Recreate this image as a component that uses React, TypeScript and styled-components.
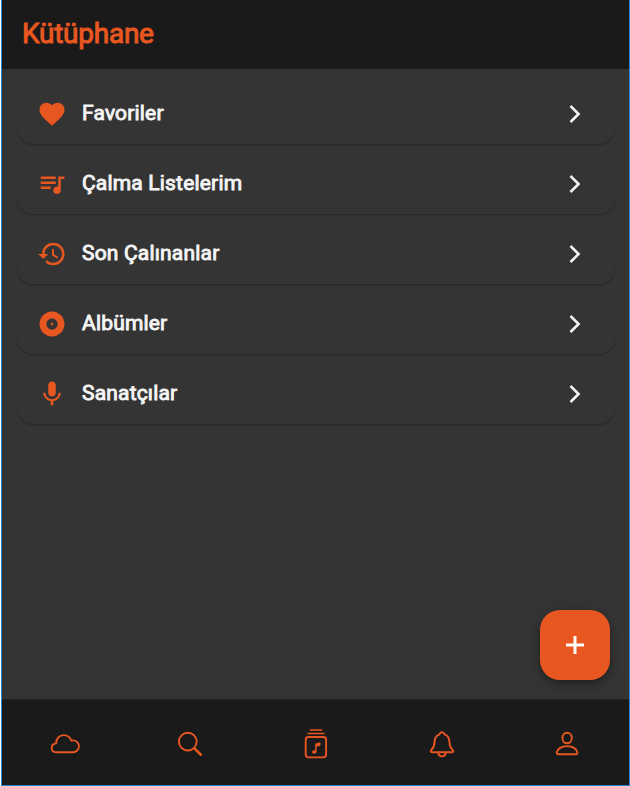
import React from "react";
import styled, { createGlobalStyle } from "styled-components";
import {
  MdAlbum,
  MdFavorite,
  MdHistory,
  MdMic,
  MdQueueMusic,
} from "react-icons/md";
import type { IconType } from "react-icons";

const accent = "#e95721";
const surface = "#343434";

const GlobalStyle = createGlobalStyle`
  *, *::before, *::after { box-sizing: border-box; }
  html, body { margin: 0; background: #fff; }
  body { font-family: Roboto, sans-serif; overflow: hidden; }
`;

const Screen = styled.div`
  height: 786px;
  margin-left: 1px;
  border: solid #2a84cc;
  border-width: 0 1px 1px;
  display: flex;
  flex-direction: column;
  background: ${surface};
`;

const Header = styled.header`
  height: 69px;
  flex: none;
  display: flex;
  align-items: center;
  padding: 0 20px 2px;
  background: #1a1a1a;
`;

const Title = styled.h1`
  margin: 0;
  color: ${accent};
  font-size: 28px;
  font-weight: 400;
  line-height: 33px;
  letter-spacing: -0.25px;
  -webkit-text-stroke: 1px ${accent};
`;

const Content = styled.main`
  position: relative;
  flex: 1;
  padding: 15px 14px 0 15px;
`;

const List = styled.ul`
  list-style: none;
  margin: 0;
  padding: 0;
  display: flex;
  flex-direction: column;
  gap: 10px;
`;

const Row = styled.li`
  height: 60px;
  display: flex;
  align-items: center;
  padding: 0 34px 0 20px;
  border-radius: 16px;
  background: ${surface};
  box-shadow: 0 1px 1.5px rgba(0, 0, 0, 0.25);
`;

const RowIcon = styled.span`
  display: flex;
  margin-right: 15px;
  color: ${accent};
`;

const Label = styled.span`
  flex: 1;
  color: #f5f5f5;
  font-size: 21px;
  line-height: 26px;
  letter-spacing: 0.18px;
  padding-bottom: 2px;
  -webkit-text-stroke: 0.9px #f5f5f5;
`;

const AddButton = styled.button`
  position: absolute;
  right: 19px;
  bottom: 19.5px;
  width: 70px;
  height: 70px;
  display: grid;
  place-items: center;
  padding: 0;
  border: 0;
  border-radius: 20px;
  background: ${accent};
  box-shadow: 0 3px 5px -1px rgba(0, 0, 0, 0.2), 0 6px 10px rgba(0, 0, 0, 0.14),
    0 1px 12px rgba(0, 0, 0, 0.12);
`;

const NavBar = styled.nav`
  height: 86px;
  flex: none;
  display: grid;
  grid-template-columns: repeat(5, 125.6px);
  background: #1a1a1a;
  border-top: 1px solid #242424;
`;

const NavItem = styled.a`
  display: grid;
  place-items: center;
  padding-top: 1px;
  color: ${accent};
`;

const Line = styled.svg`
  display: block;
  fill: none;
  stroke: currentColor;
  stroke-width: 1.9;
  stroke-linejoin: round;
  stroke-linecap: round;
`;

const Chevron = () => (
  <svg width="12" height="20" viewBox="0 0 12 20" fill="none" stroke="#f5f5f5" strokeWidth="2.5">
    <path d="M1.5 2 9.6 10 1.5 18" />
  </svg>
);

const Plus = () => (
  <svg width="20" height="20" viewBox="0 0 20 20" fill="none" stroke="#fff" strokeWidth="3">
    <path d="M10 1v18M1 10h18" />
  </svg>
);

const CloudIcon = () => (
  <Line width="32" height="32" viewBox="0 0 32 32">
    <path d="M7 25.200h17a5.900 5.900 0 0 0 0-11.800c-.8 0-1.200 0-1.700.2C21.200 10.500 18 8.100 14.600 8.100c-4.200 0-7.400 3.500-7.500 8.100C4.500 16.600 2.700 18.500 2.700 21c0 2.500 1.800 4.200 4.300 4.200z" />
  </Line>
);

const SearchIcon = () => (
  <Line width="32" height="32" viewBox="0 0 32 32">
    <circle cx="13.800" cy="14.600" r="8.900" />
    <path d="m20.400 21.400 6.500 6.300" strokeWidth="2.600" />
  </Line>
);

const MusicLibraryIcon = () => (
  <Line width="32" height="32" viewBox="0 0 32 32">
    <path d="M10.300 3.100h11.400M8 6.500h16" strokeWidth="1.500" />
    <rect x="5.700" y="10" width="20.400" height="20.400" rx="2.800" />
    <path d="M15.900 24.700V17.700l3.700-1.100v1.100" strokeWidth="1.500" />
    <ellipse cx="14.100" cy="25" rx="2.100" ry="1.700" fill="currentColor" stroke="none" />
    <path d="M15.600 16.600l4.700-1.300v2.400c0 1.500-2.200 2.300-4.100 1.400z" fill="currentColor" stroke="none" />
  </Line>
);

const BellIcon = () => (
  <Line width="32" height="32" viewBox="0 0 32 32">
    <path d="M16 5.300c-1.500 0-2.100 1.200-2.600 2-3.200 1.200-4.700 3.800-4.800 7.300-.2 4.600-1.100 6.300-3.200 8.300-1.200 1.200-.8 2.300.8 2.300h19.600c1.600 0 2-1.100.8-2.300-2.100-2-3-3.700-3.200-8.300-.1-3.500-1.600-6.100-4.800-7.300-.5-.8-1.100-2-2.600-2z" />
    <path d="M12.300 25.700c.2 2.400 1.700 3.700 3.700 3.700s3.500-1.300 3.700-3.700" />
  </Line>
);

const PersonIcon = () => (
  <Line width="32" height="32" viewBox="0 0 32 32">
    <ellipse cx="16.100" cy="11" rx="4.700" ry="5.300" />
    <path d="M7.600 27.200c-1.400 0-2-.6-1.800-1.800.6-3.700 4.800-6.300 10.300-6.300s9.700 2.600 10.300 6.300c.2 1.200-.4 1.800-1.800 1.800z" />
  </Line>
);

const sections: { label: string; icon: IconType }[] = [
  { label: "Favoriler", icon: MdFavorite },
  { label: "Çalma Listelerim", icon: MdQueueMusic },
  { label: "Son Çalınanlar", icon: MdHistory },
  { label: "Albümler", icon: MdAlbum },
  { label: "Sanatçılar", icon: MdMic },
];

const tabs = [CloudIcon, SearchIcon, MusicLibraryIcon, BellIcon, PersonIcon];

export default function App() {
  return (
    <>
      <GlobalStyle />
      <Screen>
        <Header>
          <Title>Kütüphane</Title>
        </Header>
        <Content>
          <List>
            {sections.map(({ label, icon: Icon }) => (
              <Row key={label}>
                <RowIcon>
                  <Icon size={30} />
                </RowIcon>
                <Label>{label}</Label>
                <Chevron />
              </Row>
            ))}
          </List>
          <AddButton>
            <Plus />
          </AddButton>
        </Content>
        <NavBar>
          {tabs.map((Icon, i) => (
            <NavItem key={i}>
              <Icon />
            </NavItem>
          ))}
        </NavBar>
      </Screen>
    </>
  );
}
